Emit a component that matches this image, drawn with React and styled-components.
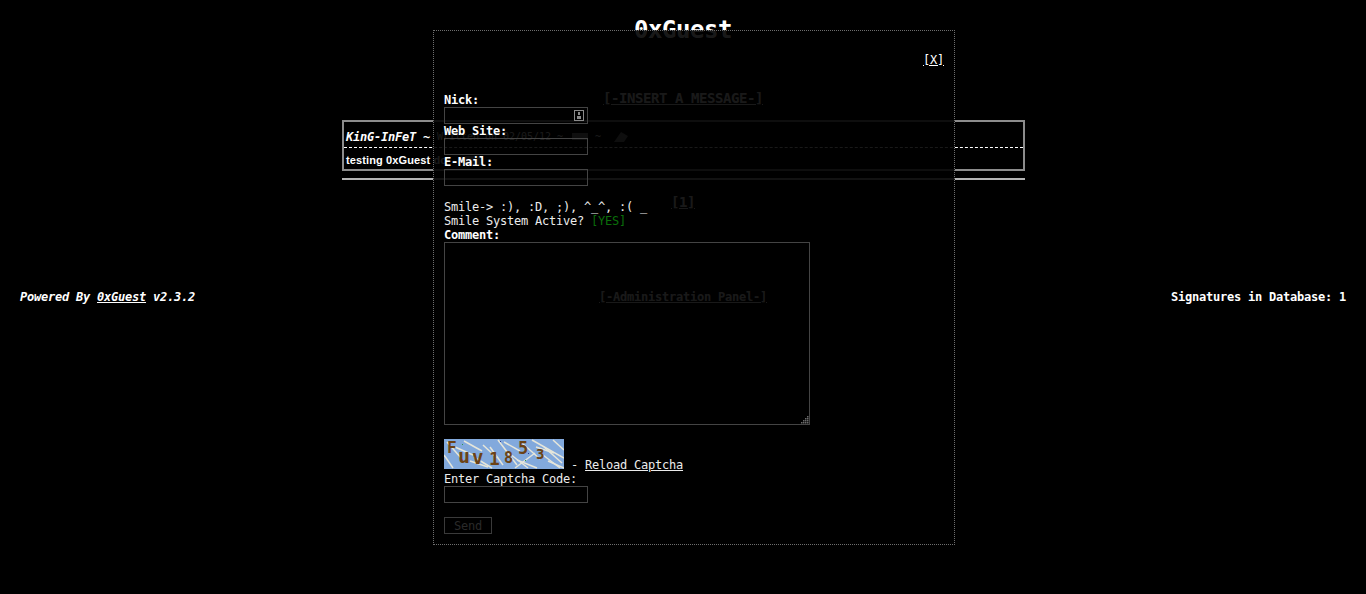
import React from "react";
import styled, { createGlobalStyle } from "styled-components";

const Global = createGlobalStyle`
  html, body { margin: 0; padding: 0; background: #000; }
  body {
    color: #fff;
    font-family: "DejaVu Sans Mono", monospace;
    font-size: 12px;
    line-height: 14px;
    letter-spacing: -0.224px;
  }
  a { color: inherit; }
`;

const Page = styled.div`
  position: relative;
  width: 1366px;
  height: 594px;
  overflow: hidden;
  background: #000;
`;

const Title = styled.h1`
  margin: 0;
  padding-top: 16px;
  height: 44px;
  text-align: center;
  font-size: 24px;
  line-height: 28px;
  font-weight: bold;
  letter-spacing: -0.45px;
  box-sizing: border-box;
`;

const InsertLink = styled.a`
  display: block;
  margin-top: 46px;
  text-align: center;
  font-size: 14px;
  line-height: 17px;
  font-weight: bold;
  letter-spacing: -0.43px;
  text-decoration: underline;
`;

const Post = styled.div`
  box-sizing: border-box;
  width: 683px;
  height: 51px;
  margin: 13px 0 0 342px;
  border: 2px solid #8c8c8c;
`;

const PostHead = styled.div`
  display: flex;
  align-items: center;
  height: 26px;
  padding: 4px 0 0 2px;
  box-sizing: border-box;
  border-bottom: 1px dashed #fff;
`;

const Author = styled.span`
  font-weight: bold;
  font-style: italic;
  white-space: pre;
`;

const PostDate = styled.span`
  font-size: 10px;
  letter-spacing: -0.02px;
  white-space: pre;
`;

const PostIcon = styled.svg`
  display: block;
  flex: none;
  margin-left: ${(p) => p.$left}px;
`;

const Tilde = styled.span`
  margin-left: 7px;
  font-size: 10px;
`;

const PostBody = styled.div`
  display: flex;
  align-items: center;
  padding: 5px 2px 0;
  font-family: "Liberation Sans", Arial, sans-serif;
  font-size: 11px;
  line-height: 14px;
  font-weight: bold;
  letter-spacing: 0.12px;
  white-space: pre;
`;

const Rule = styled.div`
  width: 683px;
  height: 2px;
  margin: 7px 0 0 342px;
  background: #b4b4b4;
`;

const Pager = styled.a`
  display: block;
  margin-top: 14px;
  text-align: center;
  font-size: 14px;
  line-height: 17px;
  font-weight: bold;
  letter-spacing: -0.43px;
  text-decoration: underline;
`;

const Footer = styled.div`
  display: grid;
  grid-template-columns: 1fr auto 1fr;
  align-items: center;
  margin-top: 79px;
  padding: 0 20px;
  font-weight: bold;
`;

const Powered = styled.span`
  font-style: italic;
`;

const AdminLink = styled.a`
  text-decoration: underline;
`;

const Signatures = styled.span`
  text-align: right;
`;

const Modal = styled.div`
  position: absolute;
  left: 433px;
  top: 30px;
  width: 522px;
  height: 515px;
  box-sizing: border-box;
  border: 1px dotted #6e6e6e;
  background: rgba(0, 0, 0, 0.9);
  padding: 22px 10px 0;
`;

const CloseRow = styled.div`
  text-align: right;
  height: 40px;
`;

const Label = styled.label`
  display: block;
  font-weight: bold;
  line-height: 14px;
  color: #fff;
`;

const Field = styled.div`
  position: relative;
  width: 144px;
  height: 17px;
`;

const TextInput = styled.input`
  display: block;
  box-sizing: border-box;
  width: 144px;
  height: 17px;
  margin: 0;
  padding: 0 2px;
  background: transparent;
  border: 1px solid #444;
  color: #fff;
  outline: none;
`;

const ContactIcon = styled.svg`
  position: absolute;
  right: 3px;
  top: 2px;
  width: 12px;
  height: 13px;
`;

const Plain = styled.div`
  line-height: 14px;
  color: #ececec;
`;

const SmileRow = styled(Plain)`
  margin-top: 14px;
`;

const Yes = styled.span`
  color: #0a6e0a;
`;

const CommentBox = styled.div`
  position: relative;
  width: 366px;
  height: 183px;
`;

const Comment = styled.textarea`
  display: block;
  box-sizing: border-box;
  width: 366px;
  height: 183px;
  margin: 0;
  padding: 2px;
  background: transparent;
  border: 1px solid #444;
  color: #fff;
  outline: none;
  resize: none;
`;

const ResizeGrip = styled.svg`
  position: absolute;
  right: 1px;
  bottom: 1px;
  width: 9px;
  height: 9px;
`;

const CaptchaRow = styled.div`
  display: flex;
  align-items: flex-end;
  gap: 7px;
  margin-top: 14px;
  height: 33px;
`;

const CaptchaImage = styled.svg`
  display: block;
  width: 120px;
  height: 30px;
  align-self: flex-start;
`;

const ReloadText = styled.span`
  color: #ececec;
  line-height: 14px;
`;

const SendButton = styled.button`
  display: block;
  box-sizing: border-box;
  width: 48px;
  height: 17px;
  margin: 14px 0 0;
  padding: 0;
  background: transparent;
  border: 1px solid #3a3a3a;
  color: #2a2a2a;
  font: 12px/14px "DejaVu Sans Mono", monospace;
  letter-spacing: -0.224px;
`;

const streaks = [
  [46, 8, 59, 26], [54, 1, 73, 26], [88, 1, 120, 19], [99, 16, 116, 29], [39, 6, 53, 19],
  [11, 8, 29, 16], [73, 21, 93, 29], [109, 1, 120, 11], [0, 16, 9, 29], [91, 14, 71, 29],
  [20, 2, 38, 12], [60, 3, 76, 12], [30, 18, 48, 29], [78, 4, 96, 20], [100, 8, 118, 24],
  [3, 3, 18, 20], [66, 15, 84, 29], [26, 22, 44, 28], [92, 8, 110, 14], [104, 22, 120, 29],
];

const glyphs = [
  ["F", 3, 14, 16], ["u", 14, 24, 20], ["v", 28, 25, 19], ["1", 45, 26, 18],
  ["8", 60, 24, 15], ["5", 74, 15, 17], ["3", 92, 20, 14],
];

const gripDots = [
  [7, 1], [5, 3], [7, 3], [3, 5], [5, 5], [7, 5], [1, 7], [3, 7], [5, 7], [7, 7],
];

function Captcha() {
  return (
    <CaptchaImage viewBox="0 0 120 30" aria-label="captcha">
      <rect width="120" height="30" fill="#82a9dc" />
      {streaks.map(([a, b, c, d], i) => (
        <line key={i} x1={a} y1={b} x2={c} y2={d} stroke="#e6e6da" strokeWidth="1.5" />
      ))}
      {glyphs.map(([t, x, y, s], i) => (
        <text key={i} x={x} y={y} fontSize={s} fontWeight="bold" fontFamily="DejaVu Sans Mono, monospace" fill="#6b4216">{t}</text>
      ))}
      <rect x="18" y="5" width="1" height="1" fill="#2a9a4a" />
      <rect x="18" y="20" width="1" height="1" fill="#b030a0" />
      <rect x="56" y="2" width="1" height="1" fill="#2a3a9a" />
      <rect x="81" y="21" width="1" height="1" fill="#2a9a4a" />
      <rect x="84" y="14" width="1" height="1" fill="#2a3a9a" />
    </CaptchaImage>
  );
}

export default function App() {
  return (
    <Page>
      <Global />
      <Title>0xGuest</Title>
      <InsertLink href="#">[-INSERT A MESSAGE-]</InsertLink>
      <Post>
        <PostHead>
          <Author>KinG-InFeT ~ </Author>
          <PostDate>Written on 02/05/12 ~</PostDate>
          <PostIcon $left={9} width="16" height="7" viewBox="0 0 16 7">
            <rect width="16" height="7" fill="#9a9a9a" />
          </PostIcon>
          <Tilde>~</Tilde>
          <PostIcon $left={12} width="16" height="12" viewBox="0 0 16 12">
            <path d="M1 11 L8 1 L15 5 L11 11 Z" fill="#8a8a8a" />
          </PostIcon>
        </PostHead>
        <PostBody>
          testing 0xGuest do
          <PostIcon $left={18} width="18" height="9" viewBox="0 0 18 9">
            <rect width="18" height="9" fill="#a0a0a0" />
          </PostIcon>
        </PostBody>
      </Post>
      <Rule />
      <Pager href="#">[1]</Pager>
      <Footer>
        <Powered>Powered By <a href="#">0xGuest</a> v2.3.2</Powered>
        <AdminLink href="#">[-Administration Panel-]</AdminLink>
        <Signatures>Signatures in Database: 1</Signatures>
      </Footer>
      <Modal>
        <CloseRow><a href="#">[X]</a></CloseRow>
        <Label>Nick:</Label>
        <Field>
          <TextInput />
          <ContactIcon viewBox="0 0 12 13">
            <rect x="1.5" y="1.5" width="9" height="10" fill="none" stroke="#8a8a8a" />
            <rect x="5" y="3" width="2" height="3" fill="#8a8a8a" />
            <rect x="4" y="7" width="4" height="3" fill="#8a8a8a" />
          </ContactIcon>
        </Field>
        <Label>Web Site:</Label>
        <Field><TextInput /></Field>
        <Label>E-Mail:</Label>
        <Field><TextInput /></Field>
        <SmileRow>Smile-&gt; :), :D, ;), ^_^, :( _</SmileRow>
        <Plain>Smile System Active? <Yes>[YES]</Yes></Plain>
        <Label>Comment:</Label>
        <CommentBox>
          <Comment />
          <ResizeGrip viewBox="0 0 9 9">
            {gripDots.map(([x, y], i) => (
              <rect key={i} x={x} y={y} width="1.5" height="1.5" fill="#6a6a6a" />
            ))}
          </ResizeGrip>
        </CommentBox>
        <CaptchaRow>
          <Captcha />
          <ReloadText>- <a href="#">Reload Captcha</a></ReloadText>
        </CaptchaRow>
        <Plain>Enter Captcha Code:</Plain>
        <Field><TextInput /></Field>
        <SendButton>Send</SendButton>
      </Modal>
    </Page>
  );
}
